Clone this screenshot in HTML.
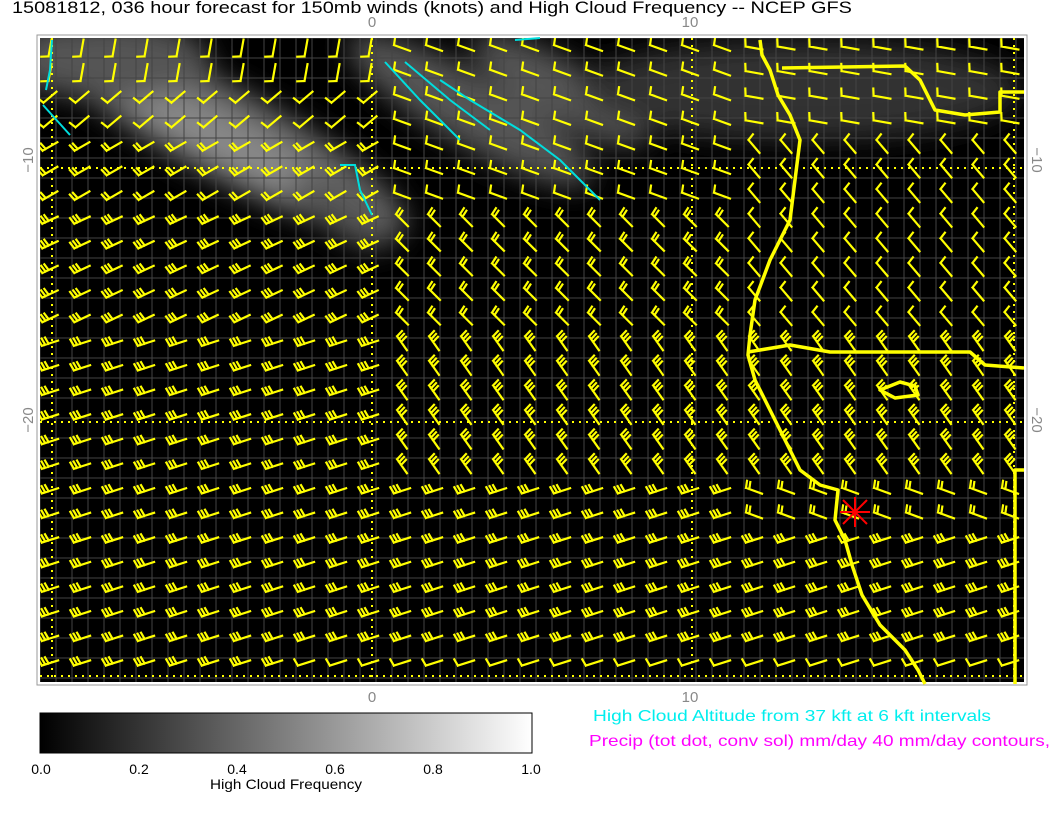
<!DOCTYPE html>
<html><head><meta charset="utf-8"><style>
html,body{margin:0;padding:0;background:#fff;width:1056px;height:816px;overflow:hidden;font-family:"Liberation Sans",sans-serif}
.t{position:absolute;white-space:nowrap;transform-origin:0 0}
</style></head><body>
<div class="t" style="left:12px;top:-2px;font-size:17px;color:#000;transform:scaleX(1.17)">15081812, 036 hour forecast for 150mb winds (knots) and High Cloud Frequency -- NCEP GFS</div>
<svg id="s" width="1056" height="816" style="position:absolute;left:0;top:0">
<defs>
<filter id="b" x="-50%" y="-50%" width="200%" height="200%"><feGaussianBlur stdDeviation="14"/></filter>
<linearGradient id="cg" x1="0" x2="1"><stop offset="0" stop-color="#000"/><stop offset="1" stop-color="#fff"/></linearGradient>
<clipPath id="cp"><rect x="40" y="38" width="984" height="644"/></clipPath>
</defs>
<rect x="37" y="35" width="990" height="650" fill="#fff" stroke="#999" stroke-width="1"/>
<rect x="40" y="38" width="984" height="644" fill="#000"/>
<g clip-path="url(#cp)" filter="url(#b)">
<ellipse cx="220" cy="130" rx="210" ry="45" fill="#666" transform="rotate(28 220 130)"/>
<ellipse cx="240" cy="150" rx="150" ry="25" fill="#888" transform="rotate(28 240 150)"/>
<ellipse cx="110" cy="60" rx="100" ry="40" fill="#555"/>
<ellipse cx="470" cy="110" rx="140" ry="35" fill="#555" transform="rotate(30 470 110)"/>
<ellipse cx="560" cy="90" rx="100" ry="30" fill="#555" transform="rotate(30 560 90)"/>
<ellipse cx="800" cy="90" rx="220" ry="50" fill="#333"/>
<ellipse cx="340" cy="210" rx="60" ry="22" fill="#555" transform="rotate(35 340 210)"/>
</g>
<g id="grid" stroke="#444" stroke-width="1" clip-path="url(#cp)"></g>
<g stroke="#ff0" stroke-width="2" stroke-dasharray="2,5" fill="none">
<line x1="372" y1="38" x2="372" y2="682"/><line x1="692" y1="38" x2="692" y2="682"/><line x1="1014" y1="38" x2="1014" y2="682"/>
<line x1="40" y1="168" x2="1024" y2="168"/><line x1="40" y1="422" x2="1024" y2="422"/><line x1="40" y1="676" x2="1024" y2="676"/>
<line x1="52" y1="38" x2="52" y2="682"/>
</g>
<g id="barbs" stroke="#ff0" stroke-width="2.2" fill="none" stroke-linecap="square" clip-path="url(#cp)"></g>
<g stroke="#ff0" stroke-width="3.5" fill="none" stroke-linejoin="round">
<path d="M760 40 L762 55 L770 70 L778 95 L790 115 L800 140 L795 180 L790 220 L770 260 L755 300 L750 335 L748 355 L755 380 L770 410 L785 440 L800 470 L820 485 L838 490 L835 520 L845 540 L852 565 L862 595 L880 625 L905 650 L918 670 L925 684"/>
<path d="M748 352 L790 345 L830 352 L970 352 L985 365 L1024 368"/>
<path d="M782 68 L905 66 L920 80 L935 110 L965 115 L1000 112 L1000 92 L1024 92"/>
<path d="M1024 470 L1015 470 L1015 684"/>
<path d="M880 390 L900 382 L915 386 L918 395 L895 398 Z"/>
</g>
<g stroke="#0dd" stroke-width="2" fill="none">
<path d="M52 40 L50 70 L46 90"/><path d="M43 105 L70 135"/>
<path d="M515 40 L540 38"/><path d="M385 62 L420 100 L460 140"/><path d="M405 62 L450 100 L490 130"/>
<path d="M440 80 L470 100 L520 130 L560 160 L580 180 L600 200"/>
<path d="M340 165 L355 165 L360 190 L372 215"/>
</g>
<g stroke="#f00" stroke-width="2"><line x1="840" y1="512" x2="870" y2="512"/><line x1="855" y1="497" x2="855" y2="527"/><line x1="843" y1="500" x2="867" y2="524"/><line x1="867" y1="500" x2="843" y2="524"/></g>
<rect x="40" y="713" width="492" height="40" fill="url(#cg)" stroke="#000"/>
<g font-family="Liberation Sans" font-size="15" fill="#888" text-anchor="middle">
<text x="372" y="27">0</text><text x="690" y="27">10</text>
<text x="372" y="702">0</text><text x="690" y="702">10</text>
<text transform="translate(33 160) rotate(-90)">−10</text><text transform="translate(33 420) rotate(-90)">−20</text>
<text transform="translate(1032 160) rotate(90)">−10</text><text transform="translate(1032 420) rotate(90)">−20</text>
</g>
<g font-family="Liberation Sans" font-size="14" fill="#000" text-anchor="middle">
<text x="41" y="774">0.0</text><text x="139" y="774">0.2</text><text x="237" y="774">0.4</text><text x="335" y="774">0.6</text><text x="433" y="774">0.8</text><text x="531" y="774">1.0</text>
<text x="286" y="789" textLength="152" lengthAdjust="spacingAndGlyphs">High Cloud Frequency</text>
</g>
<text x="593" y="721" font-family="Liberation Sans" font-size="16" fill="#0ee" textLength="398" lengthAdjust="spacingAndGlyphs">High Cloud Altitude from 37 kft at 6 kft intervals</text>
<text x="589" y="746" font-family="Liberation Sans" font-size="16" fill="#f0f" textLength="461" lengthAdjust="spacingAndGlyphs">Precip (tot dot, conv sol) mm/day 40 mm/day contours,</text>
</svg>
<script>
var NS="http://www.w3.org/2000/svg";
var g=document.getElementById('grid'),s='';
for(var x=40;x<1024;x+=16)s+='M'+x+' 38V682';
for(var y=38;y<682;y+=20)s+='M40 '+y+'H1024';
var p=document.createElementNS(NS,'path');p.setAttribute('d',s);g.appendChild(p);
var b=document.getElementById('barbs'),d='';
for(var r=0;r<26;r++){for(var c=0;c<31;c++){
 var x=50+c*32,y=48+r*24.6;
 var ang,n;
 if(x<380){ if(y<90){ang=100;n=1;} else if(y<140){ang=140;n=1;} else if(y<200){ang=150;n=2;} else if(y<330){ang=155;n=3;} else {ang=162;n=3;} }
 else if(x<740){ if(y<200){ang=-160;n=1;} else if(y<330){ang=-135;n=2;} else if(y<480){ang=-125;n=3;} else {ang=162;n=3;} }
 else { if(y<130){ang=-170;n=1;} else if(y<330){ang=-130;n=1;} else if(y<480){ang=-125;n=3;} else if(y<540){ang=-160;n=2;} else {ang=162;n=3;} }
 if(y>640&&x>300){n=1;}
 var a=ang*Math.PI/180,L=17,ux=Math.cos(a),uy=Math.sin(a);
 var sx=x-ux*L/2,sy=y-uy*L/2,ex=x+ux*L/2,ey=y+uy*L/2;
 d+='M'+sx.toFixed(1)+' '+sy.toFixed(1)+'L'+ex.toFixed(1)+' '+ey.toFixed(1);
 var fx=uy,fy=-ux; if(fy>0){fx=-fx;fy=-fy;}
 for(var k=0;k<n;k++){var bx=ex-ux*k*3.5,by=ey-uy*k*3.5;
  d+='M'+bx.toFixed(1)+' '+by.toFixed(1)+'l'+(fx*7+ux*1.5).toFixed(1)+' '+(fy*7+uy*1.5).toFixed(1);}
}}
var q=document.createElementNS(NS,'path');q.setAttribute('d',d);b.appendChild(q);
</script>
</body></html>
